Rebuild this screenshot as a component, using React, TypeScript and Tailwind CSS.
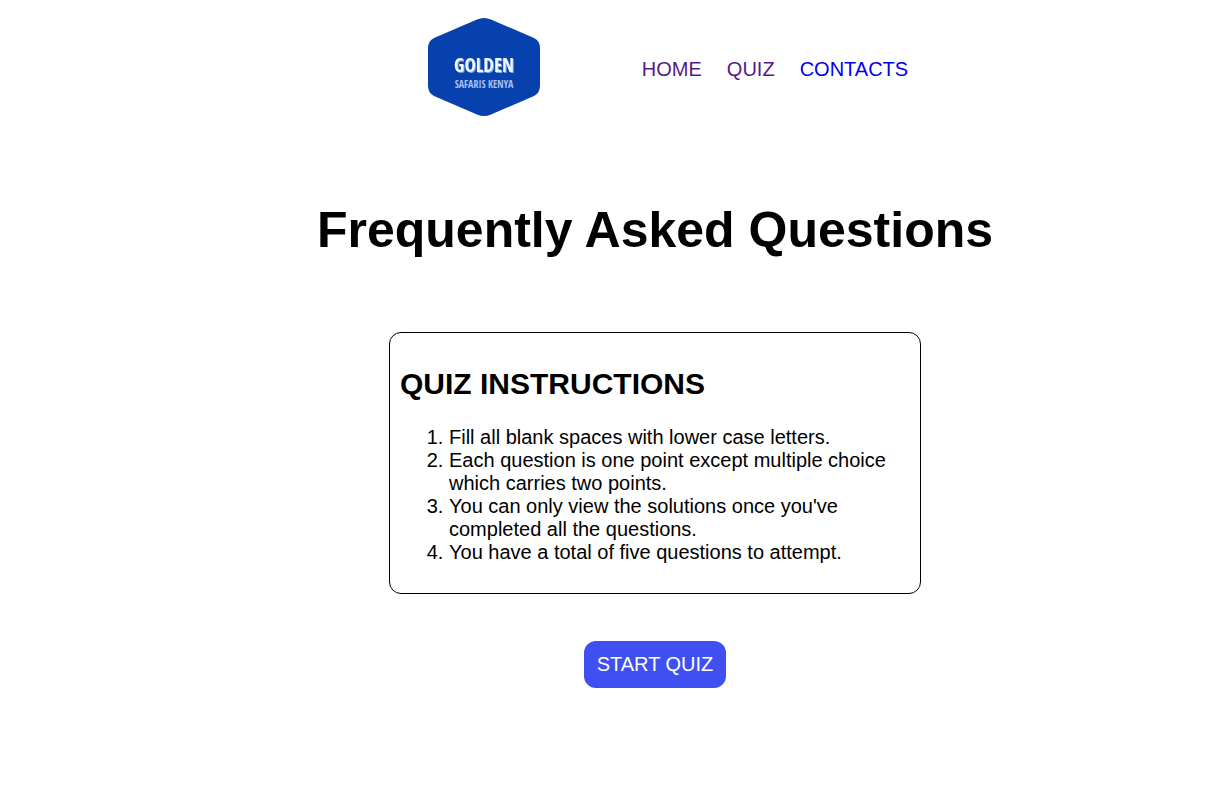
import React from "react";

const links = [
  { label: "HOME", href: "#home", color: "text-[#551a8b]" },
  { label: "QUIZ", href: "#quiz", color: "text-[#551a8b]" },
  { label: "CONTACTS", href: "#contacts", color: "text-[#0000ee]" },
];

const instructions = [
  "Fill all blank spaces with lower case letters.",
  "Each question is one point except multiple choice which carries two points.",
  "You can only view the solutions once you've completed all the questions.",
  "You have a total of five questions to attempt.",
];

function Logo() {
  return (
    <svg
      width="112"
      height="98"
      viewBox="0 0 112 98"
      role="img"
      aria-label="Golden Safaris Kenya"
      className="shrink-0"
    >
      <path
        d="M49 1.5 Q56 -1.500 63 1.5 L106 20 Q112 23 112 30 V68 Q112 75 106 78 L63 96.500 Q56 99.500 49 96.500 L6 78 Q0 75 0 68 V30 Q0 23 6 20 Z"
        fill="#0641ae"
      />
      <g
        textAnchor="middle"
        fontWeight="700"
        fontFamily="'Open Sans Condensed', 'Roboto Condensed', 'Liberation Sans Narrow', 'Liberation Sans', sans-serif"
      >
        <text
          x="56"
          y="54"
          fontSize="19"
          fill="#f2f7ff"
          className="drop-shadow-[1px_1px_0_#7fa3df]"
        >
          GOLDEN
        </text>
        <text x="56" y="70" fontSize="10" fill="#a9c2ee">
          SAFARIS KENYA
        </text>
      </g>
    </svg>
  );
}

export default function App() {
  return (
    <div className="flex min-h-screen flex-col items-center bg-white pt-[18px] pb-8 pl-[104px] font-['Liberation_Sans',Arial,sans-serif] text-xl leading-[23px] text-black">
      <header className="flex items-center gap-[102px] pl-[26px]">
        <Logo />
        <nav aria-label="Main" className="pt-1">
          <ul className="flex gap-[25px]">
            {links.map((link) => (
              <li key={link.label}>
                <a href={link.href} className={link.color}>
                  {link.label}
                </a>
              </li>
            ))}
          </ul>
        </nav>
      </header>

      <main className="flex w-full flex-col items-center">
        <h1 className="mt-[85px] text-center text-[50px] leading-[58px] font-bold">
          Frequently Asked Questions
        </h1>

        <section
          aria-labelledby="instructions-title"
          className="mt-[73px] w-full max-w-[532px] rounded-[12px] border border-black px-[10px] pt-[34px] pb-[29px]"
        >
          <h2 id="instructions-title" className="text-[30px] leading-[34px] font-bold">
            QUIZ INSTRUCTIONS
          </h2>
          <ol className="mt-[25px] list-decimal pl-[49px]">
            {instructions.map((item) => (
              <li key={item}>{item}</li>
            ))}
          </ol>
        </section>

        <button
          type="button"
          className="mt-[47px] cursor-pointer rounded-[12px] bg-[#3f4ff1] px-[13px] py-3 text-white"
        >
          START QUIZ
        </button>
      </main>
    </div>
  );
}
